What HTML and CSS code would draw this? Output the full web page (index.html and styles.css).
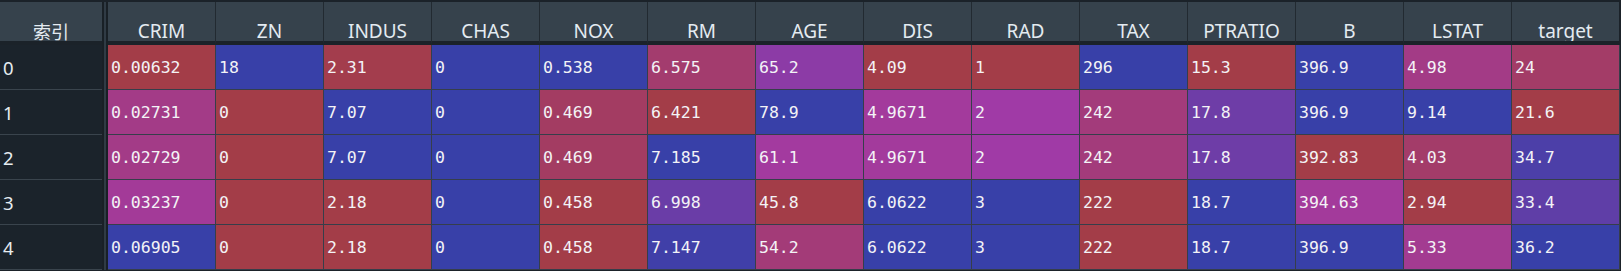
FILE: index.html
```html
<!DOCTYPE html>
<html lang="zh">
<head>
<meta charset="utf-8">
<title>DataFrame</title>
<link rel="stylesheet" href="styles.css">
</head>
<body>
<div class="grid">
  <div class="sep"></div>
  <div class="hd hd-idx"><span class="cjk">索引</span></div>
  <div class="hd">CRIM</div><div class="hd">ZN</div><div class="hd">INDUS</div><div class="hd">CHAS</div><div class="hd">NOX</div><div class="hd">RM</div><div class="hd">AGE</div><div class="hd">DIS</div><div class="hd">RAD</div><div class="hd">TAX</div><div class="hd">PTRATIO</div><div class="hd">B</div><div class="hd">LSTAT</div><div class="hd hd-last">target</div>

  <div class="idx">0</div>
  <div class="c" style="background:rgb(163,61,72)">0.00632</div>
  <div class="c" style="background:rgb(56,64,168)">18</div>
  <div class="c" style="background:rgb(163,61,77)">2.31</div>
  <div class="c" style="background:rgb(56,64,168)">0</div>
  <div class="c" style="background:rgb(56,64,168)">0.538</div>
  <div class="c" style="background:rgb(163,60,110)">6.575</div>
  <div class="c" style="background:rgb(140,59,166)">65.2</div>
  <div class="c" style="background:rgb(163,61,72)">4.09</div>
  <div class="c" style="background:rgb(163,61,72)">1</div>
  <div class="c" style="background:rgb(56,64,168)">296</div>
  <div class="c" style="background:rgb(163,61,72)">15.3</div>
  <div class="c" style="background:rgb(56,64,168)">396.9</div>
  <div class="c" style="background:rgb(163,59,134)">4.98</div>
  <div class="c" style="background:rgb(163,60,103)">24</div>

  <div class="idx">1</div>
  <div class="c" style="background:rgb(163,59,135)">0.02731</div>
  <div class="c" style="background:rgb(163,61,72)">0</div>
  <div class="c" style="background:rgb(56,64,168)">7.07</div>
  <div class="c" style="background:rgb(56,64,168)">0</div>
  <div class="c" style="background:rgb(163,60,98)">0.469</div>
  <div class="c" style="background:rgb(163,61,72)">6.421</div>
  <div class="c" style="background:rgb(56,64,168)">78.9</div>
  <div class="c" style="background:rgb(163,58,156)">4.9671</div>
  <div class="c" style="background:rgb(160,58,166)">2</div>
  <div class="c" style="background:rgb(163,59,123)">242</div>
  <div class="c" style="background:rgb(110,61,167)">17.8</div>
  <div class="c" style="background:rgb(56,64,168)">396.9</div>
  <div class="c" style="background:rgb(56,64,168)">9.14</div>
  <div class="c" style="background:rgb(163,61,72)">21.6</div>

  <div class="idx">2</div>
  <div class="c" style="background:rgb(163,59,135)">0.02729</div>
  <div class="c" style="background:rgb(163,61,72)">0</div>
  <div class="c" style="background:rgb(56,64,168)">7.07</div>
  <div class="c" style="background:rgb(56,64,168)">0</div>
  <div class="c" style="background:rgb(163,60,98)">0.469</div>
  <div class="c" style="background:rgb(56,64,168)">7.185</div>
  <div class="c" style="background:rgb(163,58,159)">61.1</div>
  <div class="c" style="background:rgb(163,58,156)">4.9671</div>
  <div class="c" style="background:rgb(160,58,166)">2</div>
  <div class="c" style="background:rgb(163,59,123)">242</div>
  <div class="c" style="background:rgb(110,61,167)">17.8</div>
  <div class="c" style="background:rgb(163,61,72)">392.83</div>
  <div class="c" style="background:rgb(163,60,105)">4.03</div>
  <div class="c" style="background:rgb(76,63,168)">34.7</div>

  <div class="idx">3</div>
  <div class="c" style="background:rgb(163,58,152)">0.03237</div>
  <div class="c" style="background:rgb(163,61,72)">0</div>
  <div class="c" style="background:rgb(163,61,72)">2.18</div>
  <div class="c" style="background:rgb(56,64,168)">0</div>
  <div class="c" style="background:rgb(163,61,72)">0.458</div>
  <div class="c" style="background:rgb(106,61,167)">6.998</div>
  <div class="c" style="background:rgb(163,61,72)">45.8</div>
  <div class="c" style="background:rgb(56,64,168)">6.0622</div>
  <div class="c" style="background:rgb(56,64,168)">3</div>
  <div class="c" style="background:rgb(163,61,72)">222</div>
  <div class="c" style="background:rgb(56,64,168)">18.7</div>
  <div class="c" style="background:rgb(163,58,155)">394.63</div>
  <div class="c" style="background:rgb(163,61,72)">2.94</div>
  <div class="c" style="background:rgb(95,62,167)">33.4</div>

  <div class="idx">4</div>
  <div class="c" style="background:rgb(56,64,168)">0.06905</div>
  <div class="c" style="background:rgb(163,61,72)">0</div>
  <div class="c" style="background:rgb(163,61,72)">2.18</div>
  <div class="c" style="background:rgb(56,64,168)">0</div>
  <div class="c" style="background:rgb(163,61,72)">0.458</div>
  <div class="c" style="background:rgb(64,63,168)">7.147</div>
  <div class="c" style="background:rgb(163,59,120)">54.2</div>
  <div class="c" style="background:rgb(56,64,168)">6.0622</div>
  <div class="c" style="background:rgb(56,64,168)">3</div>
  <div class="c" style="background:rgb(163,61,72)">222</div>
  <div class="c" style="background:rgb(56,64,168)">18.7</div>
  <div class="c" style="background:rgb(56,64,168)">396.9</div>
  <div class="c" style="background:rgb(163,59,145)">5.33</div>
  <div class="c" style="background:rgb(56,64,168)">36.2</div>
</div>
</body>
</html>
```

FILE: styles.css
```css
html, body {
  margin: 0;
  background: #1b2229;
}

body {
  padding-top: 2px;
  width: 1621px;
  height: 269px;
  overflow: hidden;
}

.grid {
  display: grid;
  grid-template-columns: 102px 6px repeat(14, 108px);
  grid-template-rows: 43px repeat(5, 45px);
}

.sep {
  grid-column: 2;
  grid-row: 1 / 7;
  background: linear-gradient(to right, #192026 0 2px, #303b45 2px 4px, #192026 4px 6px);
}

.hd {
  box-sizing: border-box;
  background: #36424c;
  border-bottom: 4px solid #1b2229;
  border-right: 1px solid #222a31;
  color: #e4ebf1;
  font-family: "Noto Sans", "Noto Sans CJK SC", sans-serif;
  font-size: 19px;
  line-height: 22px;
  padding-top: 18px;
  text-align: center;
  white-space: nowrap;
  overflow: hidden;
}

.hd-idx {
  grid-column: 1;
  border-right: none;
}

.hd-idx .cjk {
  font-family: "Noto Sans CJK SC", sans-serif;
  font-size: 18px;
}

.hd-last {
  border-right: 1px solid #1b2229;
}

.idx {
  grid-column: 1;
  box-sizing: border-box;
  background: #1b232b;
  border-bottom: 1px solid #3a444d;
  color: #e6ecf0;
  font-family: "Noto Sans", sans-serif;
  font-size: 18.5px;
  padding-left: 3px;
  display: flex;
  align-items: center;
}

.c {
  box-sizing: border-box;
  border-right: 1px solid #363e4a;
  border-bottom: 1px solid #363e4a;
  color: #f3f3f6;
  font-family: "DejaVu Sans Mono", "Liberation Mono", monospace;
  font-size: 16.5px;
  padding-left: 3px;
  padding-top: 1px;
  display: flex;
  align-items: center;
  white-space: nowrap;
}
```
